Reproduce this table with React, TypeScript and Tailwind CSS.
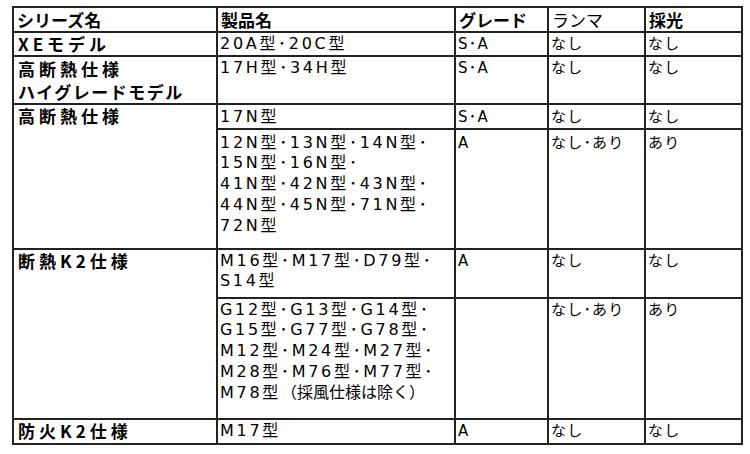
const cell = "border-2 border-[#222] align-top p-0";
const head = `${cell} font-bold text-[17px] leading-[21px] pl-[3px] pt-[1px] text-left`;
const series = `${cell} font-bold text-[17px] leading-[21px] tracking-[4px] pl-[4px]`;
const body = `${cell} text-[15px] leading-[20.7px] tracking-[1.2px] pl-[2px] pt-[1px]`;
const product = `${cell} text-[16px] leading-[20.7px] tracking-[2.7px] pl-[2px] pt-[1px]`;

const font = {
  fontFamily: '"DejaVu Sans", "Noto Sans CJK JP", sans-serif',
};
const jp = { fontFamily: '"Noto Sans CJK JP", sans-serif' };

export default function App() {
  return (
    <div className="w-[750px] h-[454px] bg-white text-black overflow-hidden pt-[6px] pl-[12px]">
      <table className="border-collapse table-fixed" style={font}>
        <colgroup>
          <col className="w-[204px]" />
          <col className="w-[238px]" />
          <col className="w-[93px]" />
          <col className="w-[97px]" />
          <col className="w-[97px]" />
        </colgroup>
        <thead>
          <tr className="h-[25px]">
            <th className={head} style={jp}>シリーズ名</th>
            <th className={head} style={jp}>製品名</th>
            <th className={head} style={jp}>グレード</th>
            <th className={`${head} font-normal`} style={jp}>ランマ</th>
            <th className={head} style={jp}>採光</th>
          </tr>
        </thead>
        <tbody>
          <tr className="h-[23px]">
            <td className={`${series} tracking-[2px]`} style={jp}>XEモデル</td>
            <td className={`${product} tracking-[1.8px]`}>20A型･20C型</td>
            <td className={body}>S･A</td>
            <td className={body}>なし</td>
            <td className={body}>なし</td>
          </tr>
          <tr className="h-[48px]">
            <td className={`${series} leading-[23px]`} style={jp}>
              高断熱仕様
              <br />
              <span className="tracking-[1.5px]">ハイグレードモデル</span>
            </td>
            <td className={product}>17H型･34H型</td>
            <td className={body}>S･A</td>
            <td className={body}>なし</td>
            <td className={body}>なし</td>
          </tr>
          <tr className="h-[25px]">
            <td className={series} style={jp} rowSpan={2}>高断熱仕様</td>
            <td className={`${product} pt-[2px]`}>17N型</td>
            <td className={`${body} pt-[2px]`}>S･A</td>
            <td className={`${body} pt-[2px]`}>なし</td>
            <td className={`${body} pt-[2px]`}>なし</td>
          </tr>
          <tr className="h-[120px]">
            <td className={`${product} pt-[3px]`}>
              12N型･13N型･14N型･
              <br />
              15N型･16N型･
              <br />
              41N型･42N型･43N型･
              <br />
              44N型･45N型･71N型･
              <br />
              72N型
            </td>
            <td className={`${body} pt-[3px]`}>A</td>
            <td className={`${body} pt-[3px]`}>なし･あり</td>
            <td className={`${body} pt-[3px]`}>あり</td>
          </tr>
          <tr className="h-[49px]">
            <td className={`${series} tracking-[2.5px]`} style={jp} rowSpan={2}>断熱K2仕様</td>
            <td className={product}>
              M16型･M17型･D79型･
              <br />
              S14型
            </td>
            <td className={body}>A</td>
            <td className={body}>なし</td>
            <td className={body}>なし</td>
          </tr>
          <tr className="h-[121px]">
            <td className={product}>
              G12型･G13型･G14型･
              <br />
              G15型･G77型･G78型･
              <br />
              M12型･M24型･M27型･
              <br />
              M28型･M76型･M77型･
              <br />
              M78型<span className="tracking-[0px]">（採風仕様は除く）</span>
            </td>
            <td className={body}></td>
            <td className={body}>なし･あり</td>
            <td className={body}>あり</td>
          </tr>
          <tr className="h-[25px]">
            <td className={`${series} tracking-[2.5px]`} style={jp}>防火K2仕様</td>
            <td className={product}>M17型</td>
            <td className={body}>A</td>
            <td className={body}>なし</td>
            <td className={body}>なし</td>
          </tr>
        </tbody>
      </table>
    </div>
  );
}
